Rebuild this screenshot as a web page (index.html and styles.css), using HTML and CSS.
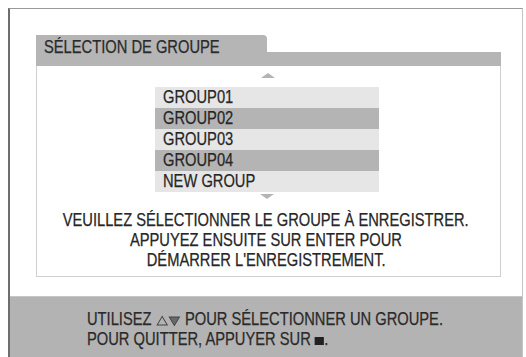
FILE: index.html
```html
<!DOCTYPE html>
<html lang="fr">
<head>
<meta charset="utf-8">
<link rel="stylesheet" href="styles.css">
</head>
<body>
<div class="frame">
  <div class="panel">
    <div class="head">
      <div class="tab"><span class="cond">SÉLECTION DE GROUPE</span></div>
      <div class="bar"></div>
    </div>
    <div class="body">
      <div class="arrow up"></div>
      <ul class="list">
        <li class="row light"><span class="cond">GROUP01</span></li>
        <li class="row dark"><span class="cond">GROUP02</span></li>
        <li class="row light"><span class="cond">GROUP03</span></li>
        <li class="row dark"><span class="cond">GROUP04</span></li>
        <li class="row light"><span class="cond">NEW GROUP</span></li>
      </ul>
      <div class="arrow down"></div>
      <div class="msg">
        <div class="cline"><span class="cond mid">VEUILLEZ SÉLECTIONNER LE GROUPE À ENREGISTRER.</span></div>
        <div class="cline"><span class="cond mid">APPUYEZ ENSUITE SUR ENTER POUR</span></div>
        <div class="cline"><span class="cond mid">DÉMARRER L'ENREGISTREMENT.</span></div>
      </div>
    </div>
  </div>
  <div class="help">
    <div class="line"><span class="cond">UTILISEZ <svg class="tri" width="30" height="11" viewBox="0 0 30 11"><path d="M1.5 10 L7.5 1.5 L13.5 10 Z" fill="none" stroke="#444" stroke-width="1.1"/><path d="M16 2 L28 2 L22 10.5 Z" fill="#6a6a6a" stroke="#444" stroke-width="1.1"/></svg> POUR SÉLECTIONNER UN GROUPE.</span></div>
    <div class="line"><span class="cond">POUR QUITTER, APPUYER SUR <span class="stop"></span>.</span></div>
  </div>
</div>
</body>
</html>
```

FILE: styles.css
```css
html, body {
  margin: 0;
  padding: 0;
  background: #ffffff;
}
body {
  font-family: "Liberation Sans", Arial, sans-serif;
  font-size: 17.5px;
  line-height: 20px;
  color: #262626;
  overflow: hidden;
  height: 357px;
}
.cond {
  display: inline-block;
  white-space: nowrap;
  transform: scaleX(0.84);
  transform-origin: left center;
  -webkit-text-stroke: 0.25px currentColor;
}
.cond.mid {
  transform-origin: center center;
}
.frame {
  margin: 8px 0 0 8px;
  width: 512px;
  height: 360px;
  border-left: 2px solid #6e6e6e;
  border-top: 1px solid #9a9a9a;
  border-right: 1px solid #c4c4c4;
  display: flex;
  flex-direction: column;
}
.panel {
  margin: 26px 0 0 26px;
  width: 465px;
}
.head {
  display: flex;
}
.tab {
  width: 231px;
  height: 31px;
  padding-left: 8px;
  padding-top: 2px;
  box-sizing: border-box;
  background: #b5b5b5;
  border-top-right-radius: 4px;
  white-space: nowrap;
  color: #2a2a2a;
}
.bar {
  flex: 1;
  margin-top: 17px;
  height: 14px;
  background: #b5b5b5;
}
.body {
  border: 1px solid #cfcfcf;
  border-top: none;
  display: flex;
  flex-direction: column;
  align-items: center;
  padding: 7px 0 6px;
}
.arrow {
  width: 0;
  height: 0;
  border-left: 7px solid transparent;
  border-right: 7px solid transparent;
}
.arrow.up {
  border-bottom: 5px solid #b4b4b4;
  margin-bottom: 9px;
  margin-left: -2px;
}
.arrow.down {
  border-top: 5px solid #b4b4b4;
  margin-top: 2px;
  margin-left: -4px;
}
.list {
  list-style: none;
  margin: 0;
  padding: 0;
  width: 224px;
  margin-left: -3px;
}
.row {
  height: 21px;
  line-height: 20px;
  padding-left: 8px;
}
.row.light { background: #e6e6e6; }
.row.dark { background: #b4b4b4; }
.msg {
  margin: 11px 0 0;
  width: 100%;
}
.cline {
  display: flex;
  justify-content: center;
  height: 20px;
  line-height: 20px;
  margin-left: -5px;
}
.line {
  line-height: 20px;
  height: 20px;
}
.help {
  margin-top: 19px;
  flex: 1;
  background: #b3b3b3;
  border-top: 1px solid #c6c6c6;
  padding: 12px 0 0 77px;
  color: #2a2a2a;
}
.tri {
  vertical-align: -1px;
}
.stop {
  display: inline-block;
  width: 11px;
  height: 8px;
  background: #222;
  vertical-align: 0;
}
```
